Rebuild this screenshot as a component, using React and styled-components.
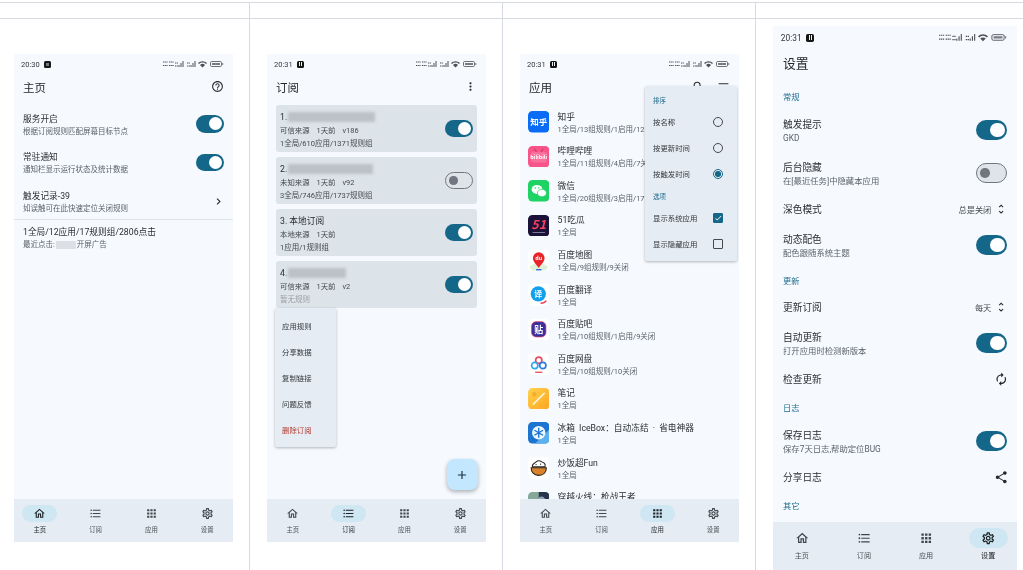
import React from "react";
import styled, {createGlobalStyle} from "styled-components";
import {
    MdOutlineHome, MdFormatListBulleted, MdApps, MdOutlineSettings, MdHelpOutline,
    MdKeyboardArrowRight, MdMoreVert, MdSearch, MdSort, MdUnfoldMore, MdAutorenew,
    MdShare, MdAdd, MdCheck,
} from "react-icons/md";

const Global = createGlobalStyle`
    html, body { margin: 0; height: 570px; overflow: hidden; background: #fff; }
    body { font-family: Roboto, "Noto Sans CJK SC", sans-serif; color: #1f2326; }
`;

//Table the four screenshots sit in
const Table = styled.div`
    margin: 2px 0 0 -3px;
`;
const TableRow = styled.div`
    display: grid;
    grid-template-columns: repeat(3, 253px) 1fr;
    border-top: 1px solid #d5dae0;
`;
const HeadCell = styled.div`
    height: 15px;
    border-right: 1px solid #d5dae0;
    &:last-child { border-right: none; }
`;
const BodyCell = styled.div`
    height: 557.6px;
    padding-left: 17px;
    box-sizing: border-box;
    display: flex;
    align-items: center;
    border-right: 1px solid #d5dae0;
    &:last-child { border-right: none; }
`;

//Phone frame
const Phone = styled.div`
    position: relative;
    flex: none;
    width: 219px;
    height: 488px;
    zoom: ${(p) => (p.$large ? 1.114 : 1)};
    background: #f6faff;
    display: flex;
    flex-direction: column;
    overflow: hidden;
    filter: blur(0.4px);
`;
const StatusBar = styled.div`
    height: 21px;
    flex: none;
    margin-bottom: -1px;
    padding: 0 9px 0 7px;
    display: flex;
    align-items: center;
    justify-content: space-between;
    font-size: 7.5px;
    color: #33373b;
`;
const Clock = styled.div`
    display: flex;
    align-items: center;
    gap: 4px;
`;
const NotifyDot = styled.span`
    width: 7.3px;
    height: 7.3px;
    box-sizing: border-box;
    border-radius: 1.5px;
    background: #161616;
    display: flex;
    align-items: center;
    justify-content: center;
    &::after {
        content: "";
        width: ${(p) => (p.$pause ? 1 : 3)}px;
        height: ${(p) => (p.$pause ? 4 : 3)}px;
        background: ${(p) => (p.$pause ? "transparent" : "#777")};
        border-left: ${(p) => (p.$pause ? "1px solid #eee" : "none")};
        border-right: ${(p) => (p.$pause ? "1px solid #eee" : "none")};
    }
`;
const TopBar = styled.div`
    height: 26px;
    flex: none;
    margin-bottom: 4.8px;
    padding: 0 9px;
    display: flex;
    align-items: center;
    justify-content: space-between;
    font-size: 11.5px;
    color: #24282b;
`;
const TopIcons = styled.div`
    display: flex;
    align-items: center;
    gap: 12px;
    font-size: 13px;
    color: #2b2f33;
    svg { display: block; }
`;
const Content = styled.div`
    flex: 1;
    min-height: 0;
    overflow: hidden;
`;

//Setting rows
const Row = styled.div`
    height: ${(p) => (p.$single ? 26 : 38.6)}px;
    padding: 0 9px;
    display: flex;
    align-items: center;
    justify-content: space-between;
`;
const RowText = styled.div`
    display: flex;
    flex-direction: column;
    gap: 3px;
    padding-top: 1.5px;
`;
const RowTitle = styled.div`
    font-size: 8.7px;
    line-height: 10px;
    color: #2a2e31;
`;
const SubText = styled.div`
    font-size: 7.5px;
    line-height: 9px;
    color: ${(p) => (p.$muted ? "#9a9fa4" : "#5a6166")};
    white-space: nowrap;
`;
const RowIcon = styled.div`
    font-size: 13px;
    color: #24282b;
    display: flex;
    margin-right: -1px;
`;
const Picker = styled.div`
    display: flex;
    align-items: center;
    gap: 3px;
    font-size: 7.4px;
    color: #44494d;
    svg { font-size: 11px; color: #24282b; }
`;
const SectionLabel = styled.div`
    height: ${(p) => (p.$menu ? 18 : 23.4)}px;
    padding: 0 ${(p) => (p.$menu ? 8 : 9)}px;
    display: flex;
    align-items: center;
    font-size: ${(p) => (p.$menu ? 6.5 : 7.4)}px;
    color: #1d6a8c;
`;
const Track = styled.div`
    width: 28px;
    height: 17.5px;
    box-sizing: border-box;
    flex: none;
    border-radius: 9px;
    display: flex;
    align-items: center;
    justify-content: ${(p) => (p.$on ? "flex-end" : "flex-start")};
    padding: 0 ${(p) => (p.$on ? 2 : 3)}px;
    background: ${(p) => (p.$on ? "#15678a" : "#dfe4e9")};
    border: ${(p) => (p.$on ? "none" : "1.2px solid #70777f")};
`;
const Knob = styled.div`
    width: ${(p) => (p.$on ? 13 : 8.5)}px;
    height: ${(p) => (p.$on ? 13 : 8.5)}px;
    border-radius: 50%;
    background: ${(p) => (p.$on ? "#fff" : "#70777f")};
`;
const Switch = ({on}) => <Track $on={on}><Knob $on={on} /></Track>;

//Home page
const Divider = styled.div`
    height: 1px;
    margin-top: -1.5px;
    background: #dde2e7;
`;
const Stats = styled.div`
    padding: 7.5px 9px;
    display: flex;
    flex-direction: column;
    gap: 3px;
`;
const RecentLine = styled.div`
    display: flex;
    align-items: center;
`;
const Redact = styled.span`
    display: inline-block;
    width: ${(p) => p.$w}px;
    height: ${(p) => p.$h}px;
    background: ${(p) => (p.$light ? "#dcdfe3" : "#bcc1c7")};
    filter: blur(${(p) => (p.$light ? 0.6 : 1.6)}px);
    margin: 0 1px;
`;

//Subscription page
const CardList = styled.div`
    padding: 0 9px;
    display: flex;
    flex-direction: column;
    gap: 4.4px;
`;
const Card = styled.div`
    height: 47.6px;
    box-sizing: border-box;
    padding: 0 4px;
    background: #dce3e9;
    border-radius: 3px;
    display: flex;
    align-items: center;
    justify-content: space-between;
`;
const CardText = styled.div`
    display: flex;
    flex-direction: column;
    gap: 4px;
    padding-top: 2.5px;
`;
const CardTitle = styled.div`
    display: flex;
    align-items: center;
    font-size: 8.7px;
    line-height: 10px;
    color: #2a2e31;
`;
const CardMeta = styled.div`
    display: flex;
    gap: 7px;
    font-size: 7.4px;
    line-height: 9px;
    color: #44494d;
`;
const CardRules = styled(SubText)`
    color: ${(p) => (p.$muted ? "#9a9fa4" : "#44494d")};
`;

//Popups
const Menu = styled.div`
    position: absolute;
    top: ${(p) => p.$top}px;
    left: ${(p) => p.$left}px;
    width: ${(p) => p.$w}px;
    box-sizing: border-box;
    padding: ${(p) => (p.$sections ? "5px 0 4.7px" : "4.7px 0")};
    background: #e5ecf3;
    border-radius: 2px;
    box-shadow: 0 1px 3px rgba(0, 0, 0, 0.28);
`;
const MenuItem = styled.div`
    height: 26px;
    padding: 0 ${(p) => (p.$sections ? 8 : 7)}px;
    display: flex;
    align-items: center;
    justify-content: space-between;
    font-size: 7.4px;
    color: ${(p) => (p.$danger ? "#b3352c" : "#33383c")};
`;
const Radio = styled.span`
    width: 10.5px;
    height: 10.5px;
    margin-right: 6px;
    box-sizing: border-box;
    border-radius: 50%;
    border: 1px solid ${(p) => (p.$on ? "#15678a" : "#44494d")};
    display: flex;
    align-items: center;
    justify-content: center;
    &::after {
        content: "";
        width: 5.5px;
        height: 5.5px;
        border-radius: 50%;
        background: ${(p) => (p.$on ? "#15678a" : "transparent")};
    }
`;
const Check = styled.span`
    width: 10.5px;
    height: 10.5px;
    margin-right: 6px;
    box-sizing: border-box;
    border-radius: 1px;
    border: 1px solid ${(p) => (p.$on ? "#15678a" : "#44494d")};
    background: ${(p) => (p.$on ? "#15678a" : "transparent")};
    color: #fff;
    display: flex;
    align-items: center;
    justify-content: center;
    font-size: 10px;
`;
const Fab = styled.div`
    position: absolute;
    right: 8.3px;
    bottom: 52px;
    width: 30.5px;
    height: 30.5px;
    border-radius: 8px;
    background: #c2e7ff;
    color: #1d3342;
    display: flex;
    align-items: center;
    justify-content: center;
    font-size: 14px;
    box-shadow: 0 2px 4px rgba(0, 0, 0, 0.3);
`;

//App list
const AppRow = styled.div`
    height: 34.6px;
    padding-left: 7.5px;
    display: flex;
    align-items: center;
    gap: 8.5px;
    svg { flex: none; }
`;
const AppName = styled(RowTitle)`
    white-space: nowrap;
    word-spacing: 2px;
`;

//Bottom navigation
const Nav = styled.div`
    height: 43px;
    flex: none;
    background: #e5ecf3;
    display: flex;
    justify-content: center;
    gap: 20.8px;
`;
const NavItem = styled.div`
    width: 35px;
    padding-top: 6px;
    display: flex;
    flex-direction: column;
    align-items: center;
    gap: 3.6px;
    font-size: 6.4px;
    line-height: 8px;
    color: ${(p) => (p.$active ? "#1c2226" : "#4a5157")};
`;
const NavPill = styled.div`
    width: 35px;
    height: 17.5px;
    border-radius: 9px;
    display: flex;
    align-items: center;
    justify-content: center;
    font-size: 13px;
    color: ${(p) => (p.$active ? "#1c2226" : "#3f474d")};
    background: ${(p) => (p.$active ? "#cfe6f3" : "transparent")};
`;

const navItems = [
    {label: "主页", Icon: MdOutlineHome},
    {label: "订阅", Icon: MdFormatListBulleted},
    {label: "应用", Icon: MdApps},
    {label: "设置", Icon: MdOutlineSettings},
];

const BottomNav = ({active}) => (
    <Nav>
        {navItems.map(({label, Icon}, i) => (
            <NavItem key={label} $active={i === active}>
                <NavPill $active={i === active}><Icon /></NavPill>
                {label}
            </NavItem>
        ))}
    </Nav>
);

const SignalIcons = () => (
    <svg width="61" height="8" viewBox="0 0 61 8" fill="#4d5155">
        <g fill="none" stroke="#4d5155" strokeWidth="1" strokeDasharray="1.200 0.500">
            <path d="M0 2h5M0 5.500h5" />
            <path d="M6 2h5M6 5.500h5" />
            <path d="M12 3h3M12 6h3" />
            <path d="M24 3h3M24 6h3" />
        </g>
        <path d="M15.500 7h1V5h-1zM17.500 7h1V3h-1zM19.500 7h1V1h-1z" />
        <path d="M27.500 7h1V5h-1zM29.500 7h1V3h-1zM31.500 7h1V1h-1z" />
        <path d="M35 3a6.500 6.500 0 0 1 9 0l-1 1a5 5 0 0 0-7 0zM37 5a3.500 3.500 0 0 1 5 0l-2.500 2.500z" />
        <rect x="47.500" y="1.500" width="11" height="5" rx="1.200" fill="none" stroke="#4d5155" strokeWidth="0.800" />
        <path d="M49 3h8v2h-8zM59.300 3h1v2h-1z" opacity="0.75" />
    </svg>
);

const Status = ({time, pause}) => (
    <StatusBar>
        <Clock>{time}<NotifyDot $pause={pause} /></Clock>
        <SignalIcons />
    </StatusBar>
);

const Svg = ({children}) => <svg width="21.5" height="21.5" viewBox="0 0 24 24">{children}</svg>;
const textProps = {fontFamily: "'Noto Sans CJK SC', sans-serif", textAnchor: "middle", fill: "#fff"};

//App logos
const logos = {
    zhihu: (
        <Svg>
            <rect width="24" height="24" rx="5" fill="#0a6cf5" />
            <text x="12" y="15.500" fontSize="9.500" fontWeight="700" {...textProps}>知乎</text>
        </Svg>
    ),
    bili: (
        <Svg>
            <rect width="24" height="24" rx="5" fill="#f9548a" />
            <rect x="3.500" y="6.500" width="17" height="12" rx="2" fill="#fb6f9d" />
            <path d="M7 3l2.500 3.500M17 3l-2.500 3.500" stroke="#c93a69" strokeWidth="1.200" />
            <text x="12" y="15" fontSize="6" fontWeight="700" {...textProps}>bilibili</text>
        </Svg>
    ),
    wechat: (
        <Svg>
            <rect width="24" height="24" rx="5" fill="#1fd264" />
            <ellipse cx="10" cy="10.500" rx="6" ry="5" fill="#fff" />
            <ellipse cx="15.500" cy="14.500" rx="5" ry="4.200" fill="#fff" stroke="#1fd264" strokeWidth="0.800" />
            <circle cx="8" cy="9" r="0.800" fill="#1fd264" />
            <circle cx="12" cy="9" r="0.800" fill="#1fd264" />
        </Svg>
    ),
    chigua: (
        <Svg>
            <rect width="24" height="24" rx="5" fill="#1a1238" />
            <text x="12" y="16" fontSize="14" fontWeight="700" fontStyle="italic" {...textProps} fill="#f8415b">51</text>
            <path d="M5 19.500h14" stroke="#8d86a8" strokeWidth="1" />
        </Svg>
    ),
    map: (
        <Svg>
            <rect width="24" height="24" rx="5" fill="#fff" />
            <path d="M2 18l6-3 8 0 6 3v2l-3 3H5l-3-3z" fill="#dff0d8" />
            <path d="M12 20c-3-4-6.500-7-6.500-11a6.500 6.500 0 0 1 13 0c0 4-3.500 7-6.500 11z" fill="#e8242b" />
            <text x="12" y="11.500" fontSize="6" fontWeight="700" {...textProps}>du</text>
            <path d="M9 22h6" stroke="#2c6bd8" strokeWidth="1.500" />
        </Svg>
    ),
    translate: (
        <Svg>
            <rect width="24" height="24" rx="5" fill="#fff" />
            <circle cx="11.500" cy="11" r="8.500" fill="#12a0ee" />
            <text x="11.500" y="14.500" fontSize="9" fontWeight="700" {...textProps}>译</text>
            <path d="M14 21.500c3 0 5-1 6.500-3" stroke="#ee3b52" strokeWidth="1.600" fill="none" />
        </Svg>
    ),
    tieba: (
        <Svg>
            <rect width="24" height="24" rx="5" fill="#fff" />
            <rect x="4" y="3" width="16" height="17" rx="5" fill="#3a2f9c" stroke="#d8386b" strokeWidth="0.800" />
            <text x="12" y="15.500" fontSize="10" fontWeight="700" {...textProps}>贴</text>
        </Svg>
    ),
    pan: (
        <Svg>
            <rect width="24" height="24" rx="5" fill="#fff" />
            <circle cx="12" cy="8" r="3.500" fill="none" stroke="#ea4a5f" strokeWidth="1.900" />
            <circle cx="7.500" cy="14" r="3.500" fill="none" stroke="#2fa6ef" strokeWidth="1.900" />
            <circle cx="16.500" cy="14" r="3.500" fill="none" stroke="#2f7de0" strokeWidth="1.900" />
            <path d="M8 21.500h8" stroke="#e9415a" strokeWidth="1.400" />
        </Svg>
    ),
    notes: (
        <Svg>
            <defs>
                <linearGradient id="notesFill" x1="0" y1="0" x2="1" y2="1">
                    <stop offset="0" stopColor="#ffd24f" />
                    <stop offset="1" stopColor="#fda51f" />
                </linearGradient>
            </defs>
            <rect width="24" height="24" rx="5" fill="url(#notesFill)" />
            <circle cx="7" cy="7" r="2.500" fill="#f4ad2a" />
            <path d="M6 18L18 6" stroke="#fff3d2" strokeWidth="1.800" strokeLinecap="round" />
        </Svg>
    ),
    icebox: (
        <Svg>
            <rect width="24" height="24" rx="5" fill="#1c74d0" />
            <path d="M24 8v11a5 5 0 0 1-5 5H8z" fill="#5cb0ee" />
            <circle cx="12" cy="12" r="7.500" fill="#eaf5fc" />
            <path d="M12 6.500v11M7.200 9.200l9.600 5.600M16.800 9.200l-9.600 5.600" stroke="#1c74d0" strokeWidth="1.500" />
        </Svg>
    ),
    fan: (
        <Svg>
            <rect width="24" height="24" rx="5" fill="#fff" />
            <path d="M5 11c-1-4 3-4 4-5.500 2-2 5-1 6.500 0 2 .5 4.500 2 3.500 5.500z" fill="#fff" stroke="#2b2620" strokeWidth="1.200" />
            <path d="M3.500 12h17c0 5-3 8.500-8.500 8.500S3.500 17 3.500 12z" fill="#d9822b" stroke="#2b2620" strokeWidth="1.200" />
            <circle cx="9" cy="8.500" r="0.700" fill="#2b2620" />
            <circle cx="14" cy="8" r="0.700" fill="#2b2620" />
        </Svg>
    ),
    cf: (
        <Svg>
            <rect width="24" height="24" rx="5" fill="#86a898" />
            <path d="M12 0h7a5 5 0 0 1 5 5v19H12z" fill="#27354a" />
            <circle cx="15" cy="9" r="4" fill="#8ea0b5" />
        </Svg>
    ),
};

const apps = [
    {logo: "zhihu", name: "知乎", rules: "1全局/13组规则/1启用/12关闭"},
    {logo: "bili", name: "哔哩哔哩", rules: "1全局/11组规则/4启用/7关闭"},
    {logo: "wechat", name: "微信", rules: "1全局/20组规则/3启用/17关闭"},
    {logo: "chigua", name: "51吃瓜", rules: "1全局"},
    {logo: "map", name: "百度地图", rules: "1全局/9组规则/9关闭"},
    {logo: "translate", name: "百度翻译", rules: "1全局"},
    {logo: "tieba", name: "百度贴吧", rules: "1全局/10组规则/1启用/9关闭"},
    {logo: "pan", name: "百度网盘", rules: "1全局/10组规则/10关闭"},
    {logo: "notes", name: "笔记", rules: "1全局"},
    {logo: "icebox", name: "冰箱 IceBox：自动冻结 · 省电神器", rules: "1全局"},
    {logo: "fan", name: "炒饭超Fun", rules: "1全局"},
    {logo: "cf", name: "穿越火线：枪战王者", rules: "1全局"},
];

const HomePage = () => (
    <Phone>
        <Status time="20:30" />
        <TopBar>主页<TopIcons><MdHelpOutline /></TopIcons></TopBar>
        <Content>
            <Row>
                <RowText><RowTitle>服务开启</RowTitle><SubText>根据订阅规则匹配屏幕目标节点</SubText></RowText>
                <Switch on />
            </Row>
            <Row>
                <RowText><RowTitle>常驻通知</RowTitle><SubText>通知栏显示运行状态及统计数据</SubText></RowText>
                <Switch on />
            </Row>
            <Row>
                <RowText><RowTitle>触发记录-39</RowTitle><SubText>如误触可在此快速定位关闭规则</SubText></RowText>
                <RowIcon><MdKeyboardArrowRight /></RowIcon>
            </Row>
            <Divider />
            <Stats>
                <RowTitle>1全局/12应用/17规则组/2806点击</RowTitle>
                <SubText as={RecentLine}>最近点击:<Redact $w={20} $h={8} $light />开屏广告</SubText>
            </Stats>
        </Content>
        <BottomNav active={0} />
    </Phone>
);

const subscriptions = [
    {no: "1.", blur: 87, source: "可信来源", ver: "v186", rules: "1全局/610应用/1371规则组", on: true},
    {no: "2.", blur: 85, source: "未知来源", ver: "v92", rules: "3全局/746应用/1737规则组", on: false},
    {no: "3. 本地订阅", source: "本地来源", rules: "1应用/1规则组", on: true},
    {no: "4.", blur: 58, source: "可信来源", ver: "v2", rules: "暂无规则", muted: true, on: true},
];

const SubscriptionPage = () => (
    <Phone>
        <Status time="20:31" pause />
        <TopBar>订阅<TopIcons><MdMoreVert /></TopIcons></TopBar>
        <Content>
            <CardList>
                {subscriptions.map((sub) => (
                    <Card key={sub.no}>
                        <CardText>
                            <CardTitle>{sub.no}{sub.blur && <Redact $w={sub.blur} $h={10} />}</CardTitle>
                            <CardMeta>
                                <span>{sub.source}</span>
                                <span>1天前</span>
                                {sub.ver && <span>{sub.ver}</span>}
                            </CardMeta>
                            <CardRules $muted={sub.muted}>{sub.rules}</CardRules>
                        </CardText>
                        <Switch on={sub.on} />
                    </Card>
                ))}
            </CardList>
        </Content>
        <Menu $top={254} $left={8} $w={61}>
            <MenuItem>应用规则</MenuItem>
            <MenuItem>分享数据</MenuItem>
            <MenuItem>复制链接</MenuItem>
            <MenuItem>问题反馈</MenuItem>
            <MenuItem $danger>删除订阅</MenuItem>
        </Menu>
        <Fab><MdAdd /></Fab>
        <BottomNav active={1} />
    </Phone>
);

const AppsPage = () => (
    <Phone>
        <Status time="20:31" pause />
        <TopBar>应用<TopIcons><MdSearch /><MdSort /></TopIcons></TopBar>
        <Content>
            {apps.map((app) => (
                <AppRow key={app.logo}>
                    {logos[app.logo]}
                    <RowText>
                        <AppName>{app.name}</AppName>
                        <SubText>{app.rules}</SubText>
                    </RowText>
                </AppRow>
            ))}
        </Content>
        <Menu $top={32} $left={125} $w={92} $sections>
            <SectionLabel $menu>排序</SectionLabel>
            <MenuItem $sections>按名称<Radio /></MenuItem>
            <MenuItem $sections>按更新时间<Radio /></MenuItem>
            <MenuItem $sections>按触发时间<Radio $on /></MenuItem>
            <SectionLabel $menu>选项</SectionLabel>
            <MenuItem $sections>显示系统应用<Check $on><MdCheck /></Check></MenuItem>
            <MenuItem $sections>显示隐藏应用<Check /></MenuItem>
        </Menu>
        <BottomNav active={2} />
    </Phone>
);

const SettingsPage = () => (
    <Phone $large>
        <Status time="20:31" pause />
        <TopBar>设置</TopBar>
        <Content>
            <SectionLabel>常规</SectionLabel>
            <Row>
                <RowText><RowTitle>触发提示</RowTitle><SubText>GKD</SubText></RowText>
                <Switch on />
            </Row>
            <Row>
                <RowText><RowTitle>后台隐藏</RowTitle><SubText>在[最近任务]中隐藏本应用</SubText></RowText>
                <Switch />
            </Row>
            <Row $single>
                <RowTitle>深色模式</RowTitle>
                <Picker>总是关闭<MdUnfoldMore /></Picker>
            </Row>
            <Row>
                <RowText><RowTitle>动态配色</RowTitle><SubText>配色跟随系统主题</SubText></RowText>
                <Switch on />
            </Row>
            <SectionLabel>更新</SectionLabel>
            <Row $single>
                <RowTitle>更新订阅</RowTitle>
                <Picker>每天<MdUnfoldMore /></Picker>
            </Row>
            <Row>
                <RowText><RowTitle>自动更新</RowTitle><SubText>打开应用时检测新版本</SubText></RowText>
                <Switch on />
            </Row>
            <Row $single>
                <RowTitle>检查更新</RowTitle>
                <RowIcon><MdAutorenew /></RowIcon>
            </Row>
            <SectionLabel>日志</SectionLabel>
            <Row>
                <RowText><RowTitle>保存日志</RowTitle><SubText>保存7天日志,帮助定位BUG</SubText></RowText>
                <Switch on />
            </Row>
            <Row $single>
                <RowTitle>分享日志</RowTitle>
                <RowIcon><MdShare /></RowIcon>
            </Row>
            <SectionLabel>其它</SectionLabel>
        </Content>
        <BottomNav active={3} />
    </Phone>
);

const App = () => (
    <>
        <Global />
        <Table>
            <TableRow>
                <HeadCell /><HeadCell /><HeadCell /><HeadCell />
            </TableRow>
            <TableRow>
                <BodyCell><HomePage /></BodyCell>
                <BodyCell><SubscriptionPage /></BodyCell>
                <BodyCell><AppsPage /></BodyCell>
                <BodyCell><SettingsPage /></BodyCell>
            </TableRow>
        </Table>
    </>
);

export default App;
